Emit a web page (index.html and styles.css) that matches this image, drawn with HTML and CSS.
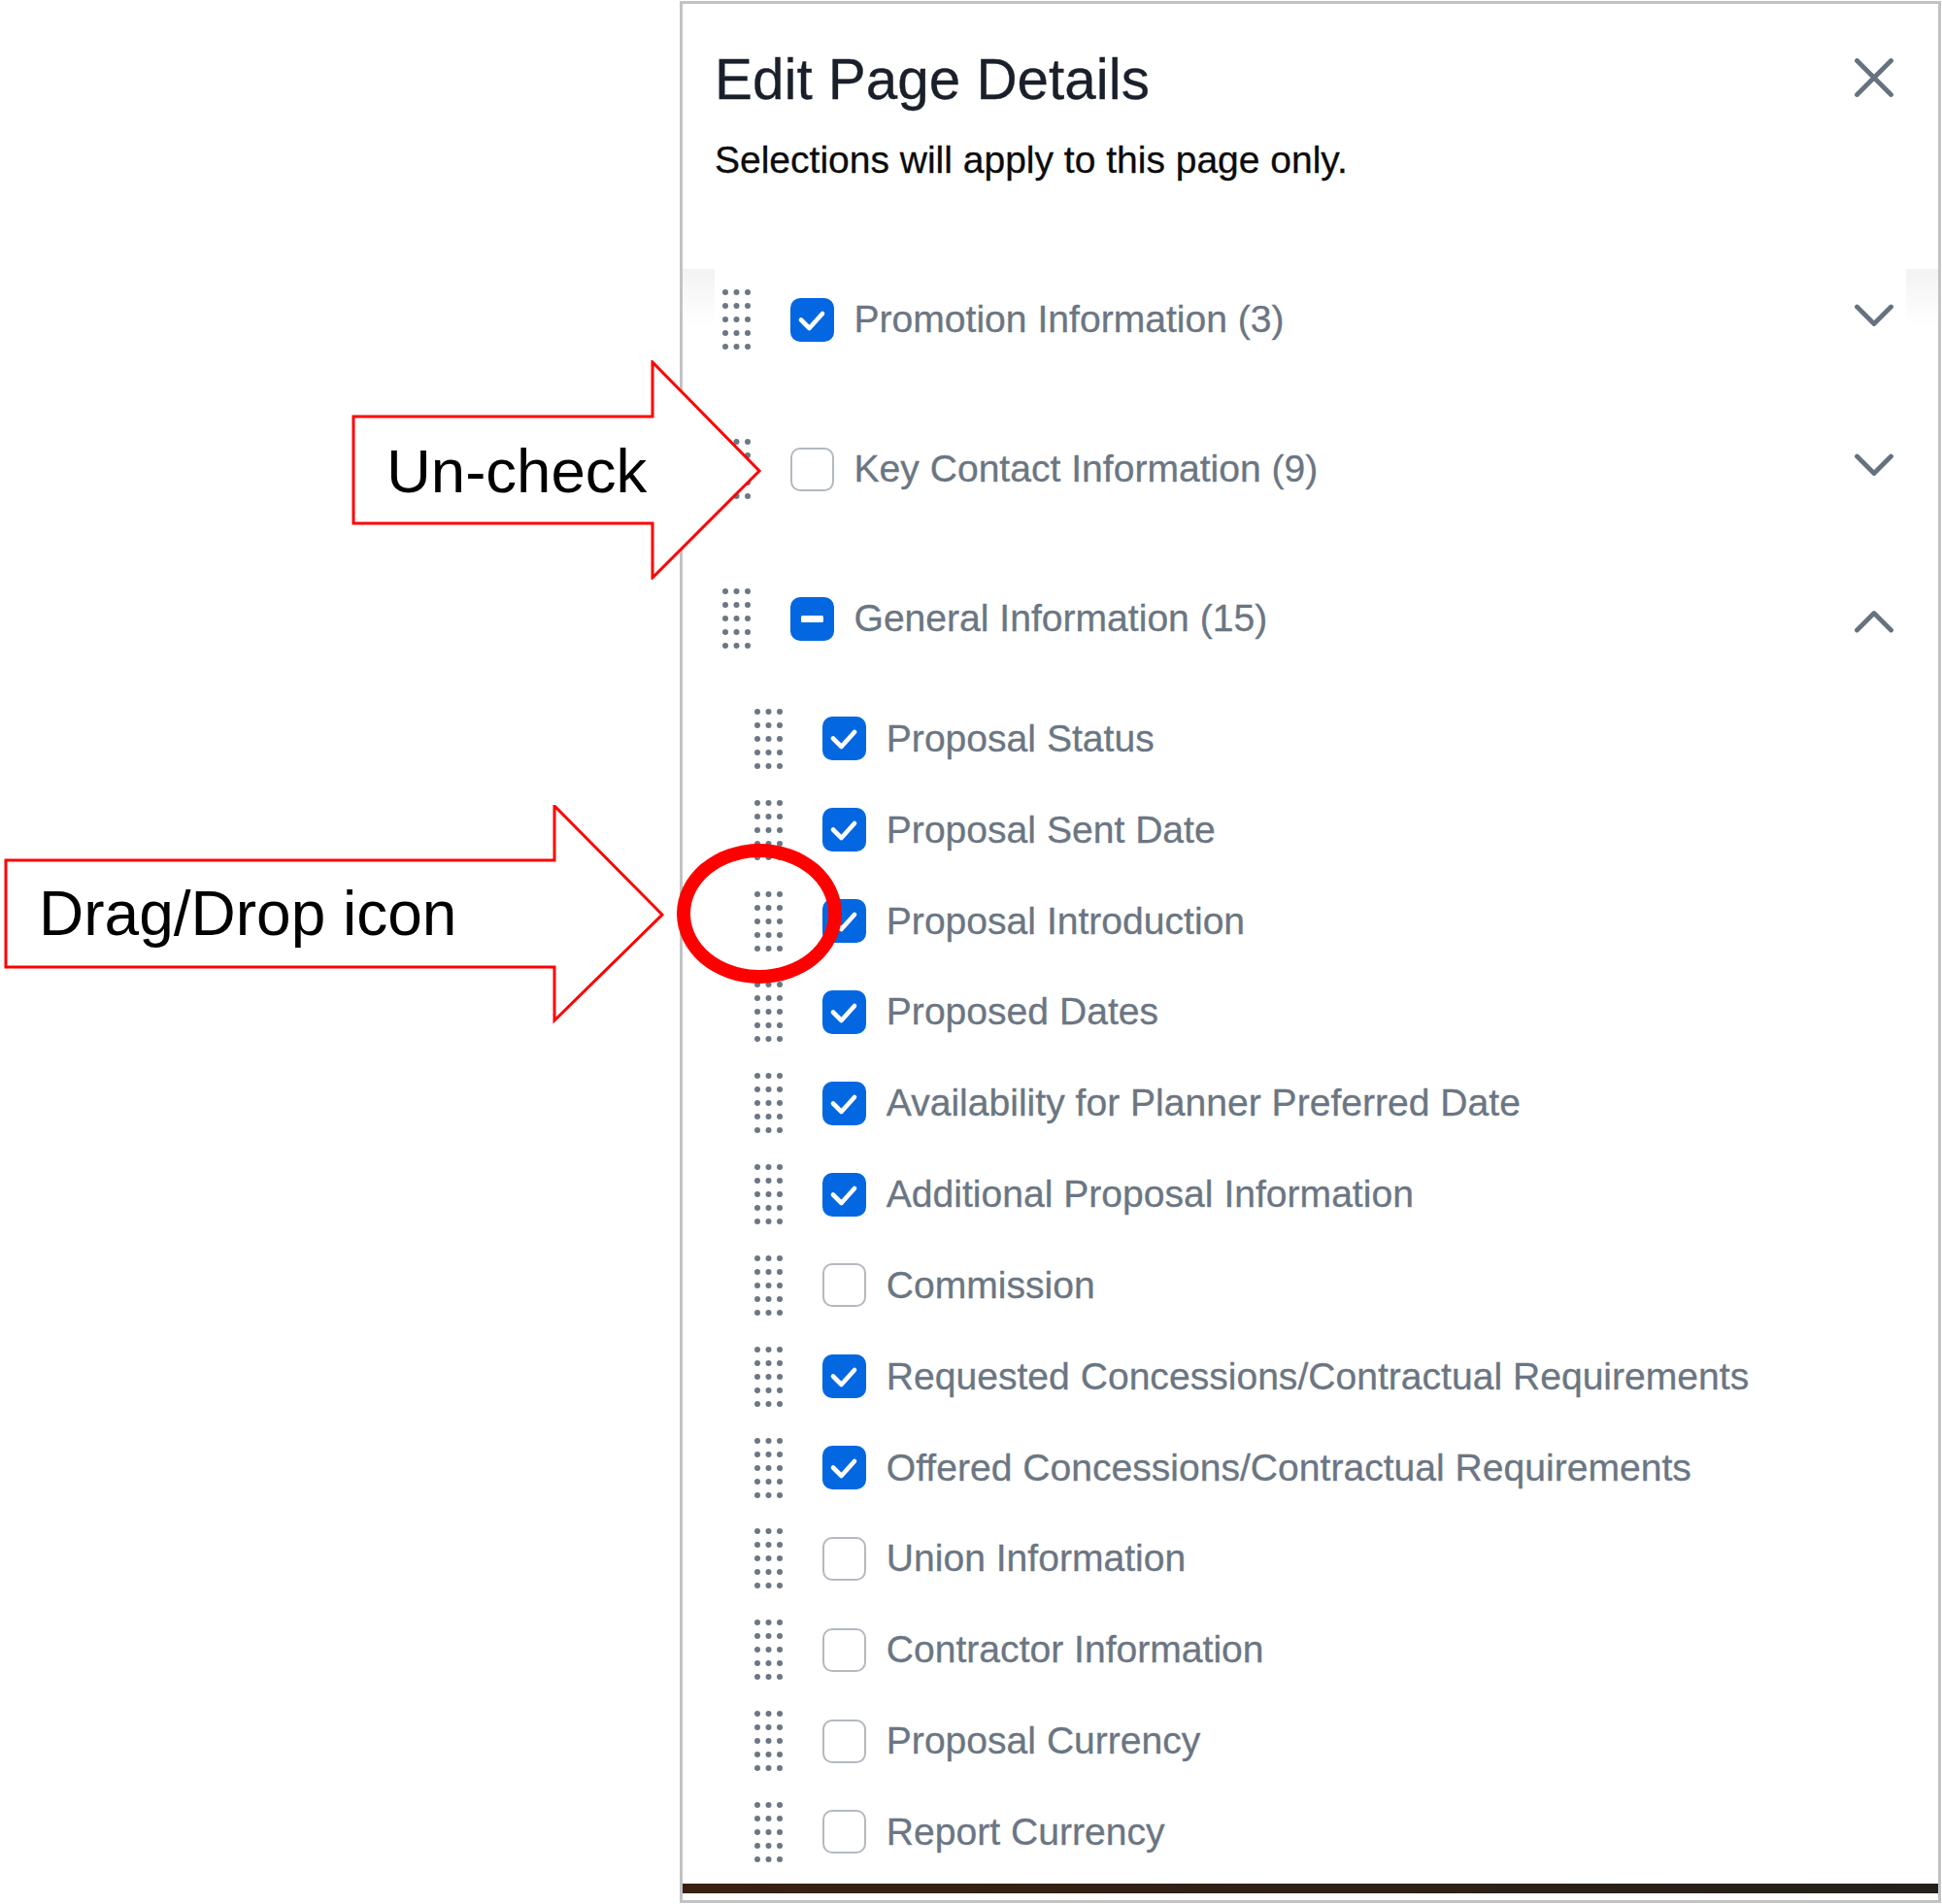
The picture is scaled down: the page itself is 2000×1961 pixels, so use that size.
FILE: index.html
```html
<!DOCTYPE html>
<html lang="en">
<head>
<meta charset="utf-8">
<title>Edit Page Details</title>
<link rel="stylesheet" href="styles.css">
</head>
<body>
<svg class="defs" width="0" height="0" aria-hidden="true">
  <symbol id="grip" viewBox="0 0 29 62">
    <g fill="#6c7783">
      <circle cx="3" cy="3" r="3"/><circle cx="14.5" cy="3" r="3"/><circle cx="26" cy="3" r="3"/>
      <circle cx="3" cy="17" r="3"/><circle cx="14.5" cy="17" r="3"/><circle cx="26" cy="17" r="3"/>
      <circle cx="3" cy="31" r="3"/><circle cx="14.5" cy="31" r="3"/><circle cx="26" cy="31" r="3"/>
      <circle cx="3" cy="45" r="3"/><circle cx="14.5" cy="45" r="3"/><circle cx="26" cy="45" r="3"/>
      <circle cx="3" cy="59" r="3"/><circle cx="14.5" cy="59" r="3"/><circle cx="26" cy="59" r="3"/>
    </g>
  </symbol>
  <symbol id="check" viewBox="0 0 45 45">
    <path d="M11 22.5 L19.5 31 L33 16" fill="none" stroke="#fff" stroke-width="4.6" stroke-linecap="round" stroke-linejoin="round"/>
  </symbol>
  <symbol id="minus" viewBox="0 0 45 45">
    <rect x="11" y="19" width="23" height="7" rx="1.5" fill="#fff"/>
  </symbol>
  <symbol id="down" viewBox="0 0 40 24">
    <path d="M2.5 3 L20 20.5 L37.5 3" fill="none" stroke="#66727f" stroke-width="4.8" stroke-linecap="round" stroke-linejoin="round"/>
  </symbol>
  <symbol id="up" viewBox="0 0 40 24">
    <path d="M2.5 21 L20 3.5 L37.5 21" fill="none" stroke="#66727f" stroke-width="4.8" stroke-linecap="round" stroke-linejoin="round"/>
  </symbol>
</svg>

<main class="panel">
  <header class="panel-head">
    <div class="head-top">
      <h1 class="title">Edit Page Details</h1>
      <svg class="close" viewBox="0 0 40 40" aria-label="Close">
        <path d="M2.5 2.5 L37.5 37.5 M37.5 2.5 L2.5 37.5" fill="none" stroke="#66727f" stroke-width="4.8" stroke-linecap="round"/>
      </svg>
    </div>
    <p class="subtitle">Selections will apply to this page only.</p>
  </header>

  <section class="groups">
    <div class="row group group-first">
      <svg class="grip"><use href="#grip"/></svg>
      <span class="box on"><svg class="mark"><use href="#check"/></svg></span>
      <span class="label">Promotion Information (3)</span>
      <svg class="chev"><use href="#down"/></svg>
    </div>
    <div class="row group">
      <svg class="grip"><use href="#grip"/></svg>
      <span class="box"></span>
      <span class="label">Key Contact Information (9)</span>
      <svg class="chev"><use href="#down"/></svg>
    </div>
    <div class="row group">
      <svg class="grip"><use href="#grip"/></svg>
      <span class="box on"><svg class="mark"><use href="#minus"/></svg></span>
      <span class="label">General Information (15)</span>
      <svg class="chev chev-up"><use href="#up"/></svg>
    </div>
  </section>

  <ul class="items">
    <li class="row item"><svg class="grip"><use href="#grip"/></svg><span class="box on"><svg class="mark"><use href="#check"/></svg></span><span class="label">Proposal Status</span></li>
    <li class="row item"><svg class="grip"><use href="#grip"/></svg><span class="box on"><svg class="mark"><use href="#check"/></svg></span><span class="label">Proposal Sent Date</span></li>
    <li class="row item"><svg class="grip"><use href="#grip"/></svg><span class="box on"><svg class="mark"><use href="#check"/></svg></span><span class="label">Proposal Introduction</span></li>
    <li class="row item"><svg class="grip"><use href="#grip"/></svg><span class="box on"><svg class="mark"><use href="#check"/></svg></span><span class="label">Proposed Dates</span></li>
    <li class="row item"><svg class="grip"><use href="#grip"/></svg><span class="box on"><svg class="mark"><use href="#check"/></svg></span><span class="label">Availability for Planner Preferred Date</span></li>
    <li class="row item"><svg class="grip"><use href="#grip"/></svg><span class="box on"><svg class="mark"><use href="#check"/></svg></span><span class="label">Additional Proposal Information</span></li>
    <li class="row item"><svg class="grip"><use href="#grip"/></svg><span class="box"></span><span class="label">Commission</span></li>
    <li class="row item"><svg class="grip"><use href="#grip"/></svg><span class="box on"><svg class="mark"><use href="#check"/></svg></span><span class="label">Requested Concessions/Contractual Requirements</span></li>
    <li class="row item"><svg class="grip"><use href="#grip"/></svg><span class="box on"><svg class="mark"><use href="#check"/></svg></span><span class="label">Offered Concessions/Contractual Requirements</span></li>
    <li class="row item"><svg class="grip"><use href="#grip"/></svg><span class="box"></span><span class="label">Union Information</span></li>
    <li class="row item"><svg class="grip"><use href="#grip"/></svg><span class="box"></span><span class="label">Contractor Information</span></li>
    <li class="row item"><svg class="grip"><use href="#grip"/></svg><span class="box"></span><span class="label">Proposal Currency</span></li>
    <li class="row item"><svg class="grip"><use href="#grip"/></svg><span class="box"></span><span class="label">Report Currency</span></li>
  </ul>

  <div class="footer-bar"></div>
</main>

<div class="callout callout-uncheck">
  <svg class="arrow" viewBox="0 0 424 226">
    <path d="M2 58 H310 V2 L420 114 L310 224 V168 H2 Z"/>
  </svg>
  <span class="callout-text">Un-check</span>
</div>

<div class="callout callout-drag">
  <svg class="arrow" viewBox="0 0 680 226">
    <path d="M2 57 H567 V1 L678 113 L567 222 V167 H2 Z"/>
  </svg>
  <span class="callout-text">Drag/Drop icon</span>
</div>

<div class="ring"></div>
</body>
</html>
```
FILE: styles.css
```css
* { box-sizing: border-box; }

html, body {
  margin: 0;
  padding: 0;
  background: #fff;
}

body {
  position: relative;
  width: 2000px;
  height: 1961px;
  overflow: hidden;
  font-family: "Liberation Sans", Arial, sans-serif;
  padding: 1px 1px 1px 700px;
}

.defs { position: absolute; }

.panel {
  height: 1959px;
  border: 3px solid #c2c2c2;
  background: #fff;
  display: flex;
  flex-direction: column;
}

.panel-head {
  height: 248px;
  padding: 49px 46px 0 33px;
  flex: none;
}

.head-top {
  display: flex;
  justify-content: space-between;
  align-items: flex-start;
}

.title {
  margin: 0;
  font-size: 58.4px;
  line-height: 58px;
  font-weight: 400;
  color: #1a2029;
  -webkit-text-stroke: 0.3px #1a2029;
}

.close {
  width: 40px;
  height: 40px;
  margin-top: 7px;
  flex: none;
}

.subtitle {
  margin: 31px 0 0;
  font-size: 39px;
  line-height: 46px;
  color: #0b0b0b;
  -webkit-text-stroke: 0.3px #0b0b0b;
}

.groups, .items {
  flex: none;
}

.items {
  list-style: none;
  margin: 0;
  padding: 0;
}

.row {
  display: flex;
  align-items: center;
}

.group {
  height: 154px;
  padding: 0 46px 0 40.7px;
}

.group-first {
  background:
    linear-gradient(#f3f3f3, #fff) left 25px / 33px 60px no-repeat,
    linear-gradient(#f3f3f3, #fff) right 25px / 33px 60px no-repeat;
}

.item {
  height: 93.83px;
  padding-left: 74px;
}

.grip {
  width: 29px;
  height: 62px;
  flex: none;
  margin-right: 41.3px;
}

.box {
  width: 45px;
  height: 45px;
  flex: none;
  border: 2.5px solid #b3b9bf;
  border-radius: 10px;
  background: #fff;
  margin-right: 20.5px;
  position: relative;
}

.box.on {
  border: 0;
  background: #0467e2;
}

.mark {
  display: block;
  width: 45px;
  height: 45px;
}

.label {
  font-size: 39.1px;
  line-height: 46px;
  color: #6b7682;
  white-space: nowrap;
  -webkit-text-stroke: 0.3px #6b7682;
}

.chev {
  width: 40px;
  height: 24px;
  flex: none;
  margin-left: auto;
  margin-top: -8px;
}

.chev-up {
  margin-top: 6px;
}

.footer-bar {
  height: 10px;
  margin-top: 6px;
  flex: none;
  background: linear-gradient(90deg, #3a2011, #23201a);
}

.callout {
  position: absolute;
}

.arrow {
  position: absolute;
  left: 0;
  top: 0;
  width: 100%;
  height: 100%;
  display: block;
}

.arrow path {
  fill: #fff;
  stroke: #ff0000;
  stroke-width: 3;
  stroke-linejoin: miter;
}

.callout-text {
  position: absolute;
  font-size: 63.5px;
  line-height: 74px;
  color: #000;
  white-space: nowrap;
}

.callout-uncheck {
  left: 362px;
  top: 371px;
  width: 424px;
  height: 226px;
}

.callout-uncheck .callout-text {
  left: 36px;
  top: 77px;
}

.callout-drag {
  left: 4px;
  top: 829px;
  width: 680px;
  height: 226px;
}

.callout-drag .callout-text {
  left: 36px;
  top: 75px;
  font-size: 64px;
}

.ring {
  position: absolute;
  left: 697px;
  top: 869px;
  width: 170px;
  height: 144px;
  border: 14px solid #ff0000;
  border-radius: 50%;
}
```
